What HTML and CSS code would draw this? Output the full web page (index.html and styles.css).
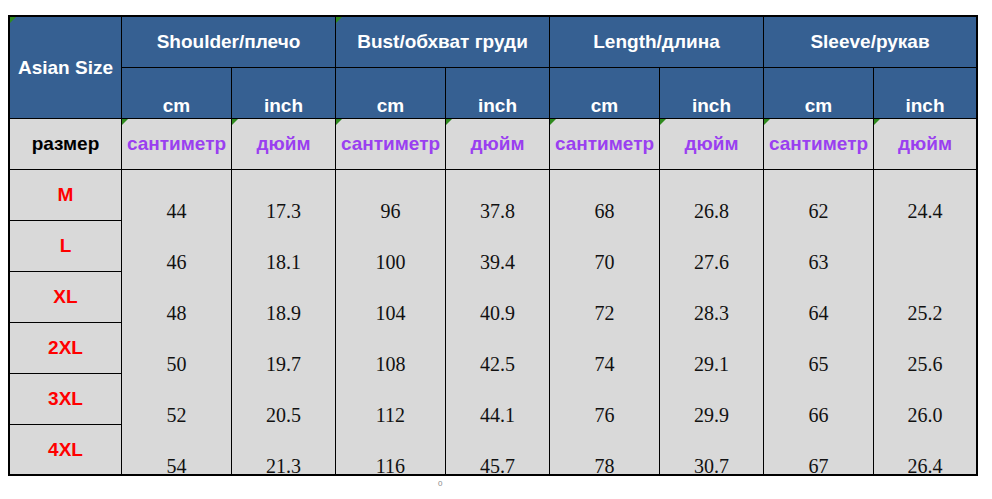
FILE: index.html
```html
<!DOCTYPE html>
<html>
<head>
<meta charset="utf-8">
<link rel="stylesheet" href="styles.css">
</head>
<body>
<div class="sheet">
  <div class="h corner mark" style="grid-row: 1 / span 2; grid-column: 1;">Asian Size</div>
  <div class="h group">Shoulder/плечо</div>
  <div class="h group mark">Bust/обхват груди</div>
  <div class="h group">Length/длина</div>
  <div class="h group">Sleeve/рукав</div>

  <div class="h unit">cm</div><div class="h unit">inch</div>
  <div class="h unit">cm</div><div class="h unit">inch</div>
  <div class="h unit">cm</div><div class="h unit">inch</div>
  <div class="h unit">cm</div><div class="h unit">inch</div>

  <div class="g label">размер</div>
  <div class="g ru mark">сантиметр</div><div class="g ru mark">дюйм</div>
  <div class="g ru mark">сантиметр</div><div class="g ru mark">дюйм</div>
  <div class="g ru mark">сантиметр</div><div class="g ru mark">дюйм</div>
  <div class="g ru mark">сантиметр</div><div class="g ru mark">дюйм</div>

  <div class="g size" style="grid-row: 4; grid-column: 1;">M</div>
  <div class="g size" style="grid-row: 5; grid-column: 1;">L</div>
  <div class="g size" style="grid-row: 6; grid-column: 1;">XL</div>
  <div class="g size" style="grid-row: 7; grid-column: 1;">2XL</div>
  <div class="g size" style="grid-row: 8; grid-column: 1;">3XL</div>
  <div class="g size" style="grid-row: 9; grid-column: 1;">4XL</div>

  <div class="g col" style="grid-column: 2;"><div class="v">44</div><div class="v">46</div><div class="v">48</div><div class="v">50</div><div class="v">52</div><div class="v">54</div></div>
  <div class="g col" style="grid-column: 3;"><div class="v">17.3</div><div class="v">18.1</div><div class="v">18.9</div><div class="v">19.7</div><div class="v">20.5</div><div class="v">21.3</div></div>
  <div class="g col" style="grid-column: 4;"><div class="v">96</div><div class="v">100</div><div class="v">104</div><div class="v">108</div><div class="v">112</div><div class="v">116</div></div>
  <div class="g col" style="grid-column: 5;"><div class="v">37.8</div><div class="v">39.4</div><div class="v">40.9</div><div class="v">42.5</div><div class="v">44.1</div><div class="v">45.7</div></div>
  <div class="g col" style="grid-column: 6;"><div class="v">68</div><div class="v">70</div><div class="v">72</div><div class="v">74</div><div class="v">76</div><div class="v">78</div></div>
  <div class="g col" style="grid-column: 7;"><div class="v">26.8</div><div class="v">27.6</div><div class="v">28.3</div><div class="v">29.1</div><div class="v">29.9</div><div class="v">30.7</div></div>
  <div class="g col" style="grid-column: 8;"><div class="v">62</div><div class="v">63</div><div class="v">64</div><div class="v">65</div><div class="v">66</div><div class="v">67</div></div>
  <div class="g col" style="grid-column: 9;"><div class="v">24.4</div><div class="v"></div><div class="v">25.2</div><div class="v">25.6</div><div class="v">26.0</div><div class="v">26.4</div></div>
</div>
<div class="note">0</div>
</body>
</html>
```

FILE: styles.css
```css
html, body {
  margin: 0;
  padding: 0;
  background: #fff;
}

.sheet {
  margin: 15px 0 0 8px;
  display: grid;
  grid-template-columns: 111px 109px 103px 109px 103px 109px 103px 109px 102px;
  grid-template-rows: 50px 50px 50px 50px 50px 50px 50px 50px 49px;
  gap: 1px;
  width: fit-content;
  background: #000;
  border: 2px solid #000;
  font-family: "Liberation Sans", Arial, sans-serif;
  font-weight: bold;
  font-size: 19px;
}

.h {
  background: #366092;
  color: #fff;
  display: flex;
  justify-content: center;
  align-items: center;
  position: relative;
}

.group {
  grid-column: span 2;
}

.unit {
  align-items: flex-end;
  padding-bottom: 1px;
}

.g {
  background: #d9d9d9;
  display: flex;
  justify-content: center;
  align-items: center;
  position: relative;
}

.label {
  color: #000;
}

.ru {
  color: #9a3ff0;
  white-space: nowrap;
}

.size {
  color: #ff0000;
}

.col {
  grid-row: 4 / span 6;
  flex-direction: column;
  justify-content: flex-start;
  overflow: hidden;
  font-family: "Liberation Serif", "Times New Roman", serif;
  font-weight: normal;
  font-size: 20px;
  color: #111;
}

.v {
  height: 51px;
  flex: none;
  width: 100%;
  box-sizing: border-box;
  padding-top: 31px;
  line-height: 20px;
  text-align: center;
}

.mark::before {
  content: "";
  position: absolute;
  left: 0;
  top: 0;
  width: 0;
  height: 0;
  border-top: 6px solid #2f8a1e;
  border-right: 6px solid transparent;
}

.note {
  padding: 3px 0 0 438px;
  font-family: "Liberation Sans", Arial, sans-serif;
  font-size: 8px;
  color: #8a8a8a;
}
```
